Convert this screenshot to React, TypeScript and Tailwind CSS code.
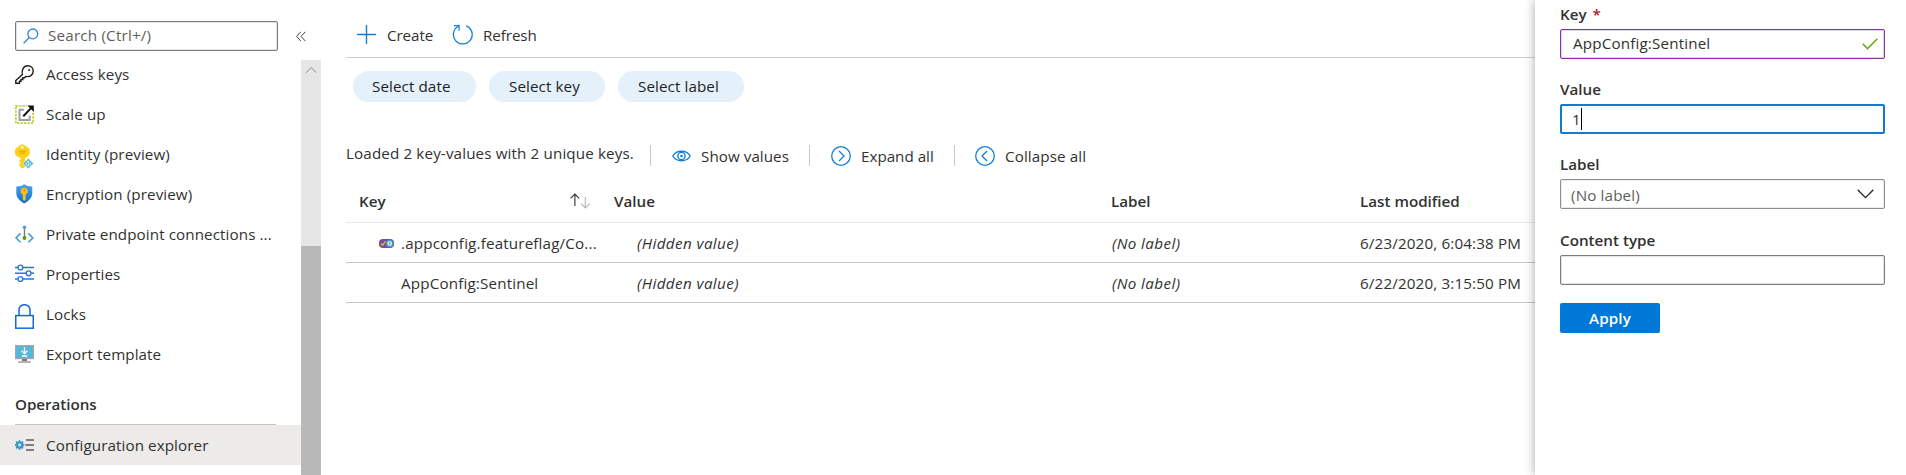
import type { ReactNode } from "react";

const KeyIcon = () => (
  <svg width="19" height="19" viewBox="0 0 19 19" fill="none" stroke="#1b1b1b" strokeWidth="1.4">
    <path d="M7.4 9.6C6.2 5.2 8.6.8 12.8.8c3.200 0 5.400 2.200 5.400 5.300 0 4-3.500 6.200-7.400 5.300L9.500 12.700H7.800v1.800H6v1.800H4.500v1.900H.8v-2.700z" />
    <circle cx="14.200" cy="4.900" r="1" fill="#1b1b1b" stroke="none" />
  </svg>
);

const ScaleIcon = () => (
  <svg width="19" height="19" viewBox="0 0 19 19" fill="none">
    <rect x="0.900" y="0.900" width="17.200" height="17.200" stroke="#b8d432" strokeWidth="1.800" strokeDasharray="2.300 1.140" />
    <rect x="12" y="0" width="7" height="7" fill="#fff" />
    <path d="M9 4.800H4.500v10.200h10.200V10.500" stroke="#a0a0a0" strokeWidth="2" />
    <path d="M8.300 11.200L15.800 3.400" stroke="#111" strokeWidth="2" />
    <path d="M12.300.6h6.500v6.500z" fill="#111" />
  </svg>
);

const IdentityIcon = () => (
  <svg width="20" height="25" viewBox="0 0 20 25" fill="none">
    <path d="M5.500.9Q7.300-.4 9.100.9l4.400 3.200q1.300 1 1.300 2.400v2.700q0 1.300-1 2.200l-3.600 3.100v8.200l-2.300 1.500q-.7.400-1.300-.2l-2.100-2.100v-1.600l1.300-1.200-1.300-1.200v-1.600l1.300-1.100v-1L1 11.400Q0 10.500 0 9.200V6.500Q0 5.100 1.300 4.100z" fill="#fcd116" />
    <circle cx="7.300" cy="3.300" r="1.400" fill="#fff" />
    <path d="M3.500 7.200h7.600M4.600 9.100h5.400" stroke="#d9a300" strokeWidth="1" />
    <path d="M13.300 14.300l5.400 5.200-5.400 5.200-5.400-5.200z" fill="#59b4d9" stroke="#fff" strokeWidth=".6" />
    <path d="M13.300 16.500v5.800M13.300 17l-2.800 3 2.800 2 2.800-2z" stroke="#d7eef8" strokeWidth=".9" />
  </svg>
);

const ShieldIcon = () => (
  <svg width="19" height="20" viewBox="0 0 19 20">
    <defs>
      <linearGradient id="shield" x1="0" y1="0" x2="0" y2="1">
        <stop offset="0" stopColor="#4aa3ee" />
        <stop offset="1" stopColor="#0f6fcb" />
      </linearGradient>
    </defs>
    <path d="M1.300 2.500Q6.300 2.600 9.300.3q3 2.300 8 2.200v6.800c0 5-4.600 8.200-8 10.200-3.400-2-8-5.200-8-10.200z" fill="url(#shield)" />
    <path d="M9.300 3.800a3.500 3.500 0 0 1 1.400 6.700v5.200L9.300 17l-1.500-1.400v-5.100A3.500 3.500 0 0 1 9.300 3.800z" fill="#fbc112" />
    <circle cx="9.300" cy="6.200" r="1" fill="#c98a00" />
  </svg>
);

const EndpointIcon = () => (
  <svg width="19" height="19" viewBox="0 0 19 19" fill="none">
    <path d="M5.600 8.400L1 12.900l4.600 4.300M13.300 8.400l4.600 4.500-4.600 4.300" stroke="#3fa1c9" strokeWidth="1.500" />
    <path d="M9.500 3v9" stroke="#7a7a7a" strokeWidth="1.400" />
    <circle cx="9.500" cy="2.300" r="1.700" fill="#3fa1c9" />
    <circle cx="9.500" cy="12.900" r="2" fill="#57a300" />
  </svg>
);

const PropertiesIcon = () => (
  <svg width="19" height="19" viewBox="0 0 19 19" fill="none" stroke="#2a75e0" strokeWidth="1.400">
    <path d="M0 3.500h3M8 3.500h11M0 9.300h11M16 9.300h3M0 15h3M8 15h11" strokeWidth="1.500" />
    <circle cx="5.400" cy="3.500" r="2.400" />
    <circle cx="13.600" cy="9.300" r="2.400" />
    <circle cx="5.400" cy="15" r="2.400" />
  </svg>
);

const LockIcon = () => (
  <svg width="19" height="25" viewBox="0 0 19 25" fill="none" stroke="#1565dc" strokeWidth="1.500">
    <rect x="0.750" y="11.600" width="17.500" height="12.600" />
    <path d="M4 11.600V5.700a5.500 5 0 0 1 11 0v5.900" />
  </svg>
);

const ExportIcon = () => (
  <svg width="19" height="18" viewBox="0 0 19 18" fill="none">
    <rect x="0.600" y="0.600" width="17.800" height="13" fill="#59b4d9" stroke="#a3a8aa" strokeWidth="1.200" />
    <path d="M7 14h5v2H7z" fill="#7a7a7a" />
    <path d="M3.200 17h12.600" stroke="#a0a1a2" strokeWidth="1.600" />
    <path d="M9.500 2.200v6M6.600 5.700l2.900 2.900 2.900-2.900M6.800 11h5.400" stroke="#fff" strokeWidth="1.300" />
  </svg>
);

const ConfigIcon = () => (
  <svg width="19" height="12" viewBox="0 0 19 12" fill="none">
    <circle cx="4.600" cy="6" r="2.600" stroke="#3999c6" strokeWidth="2.400" />
    <path d="M4.600 1.200v1.500M4.600 9.300v1.500M0 6h1.300M7.900 6h1.300M1.200 2.600l1.200 1.200M6.800 8.200L8 9.400M1.200 9.400l1.200-1.200M6.800 3.800L8 2.600" stroke="#3999c6" strokeWidth="1.900" />
    <path d="M11 1h8M10.300 6h8.700M11 11h8" stroke="#7f7f7f" strokeWidth="2" />
  </svg>
);

type Item = { label: string; icon: ReactNode; shift: string };

const items: Item[] = [
  { label: "Access keys", icon: <KeyIcon />, shift: "pb-[2px]" },
  { label: "Scale up", icon: <ScaleIcon />, shift: "pb-[2px]" },
  { label: "Identity (preview)", icon: <IdentityIcon />, shift: "pt-[3px]" },
  { label: "Encryption (preview)", icon: <ShieldIcon />, shift: "pb-[2px]" },
  { label: "Private endpoint connections ...", icon: <EndpointIcon />, shift: "pb-[2px]" },
  { label: "Properties", icon: <PropertiesIcon />, shift: "pb-[3px]" },
  { label: "Locks", icon: <LockIcon />, shift: "pt-[3px]" },
  { label: "Export template", icon: <ExportIcon />, shift: "pb-[2px]" },
];

function Sidebar() {
  return (
    <aside className="flex w-[321px] shrink-0 flex-col tracking-[0.09px]">
      <div className="flex h-[55px] shrink-0 items-start pl-[15px] pt-[21px]">
        <div className="flex h-[30px] w-[263px] items-center rounded-[2px] border border-[#7d7c7a] pl-[7px] text-[#605e5c] shadow-[inset_0_0_0_1px_#e4e4e4]">
          <svg width="16" height="16" viewBox="0 0 16 16" fill="none" stroke="#2b88d8" strokeWidth="1.300">
            <circle cx="9.800" cy="5.900" r="4.900" />
            <path d="M6.300 9.500L.6 15.200" />
          </svg>
          <span className="-mt-[2px] ml-[9px] tracking-[0.2px]">Search (Ctrl+/)</span>
        </div>
        <svg className="ml-[18px] mt-[10px]" width="10" height="11" viewBox="0 0 10 11" fill="none" stroke="#444" strokeWidth="1">
          <path d="M4.800.8L.6 5.400l4.200 4.600M9.300.8L5.100 5.400l4.200 4.600" />
        </svg>
      </div>
      <div className="flex min-h-0 flex-1">
        <div className="w-[301px]">
          {items.map((it) => (
            <div key={it.label} className="flex h-10 items-center pl-[15px]">
              <span className={`flex h-10 w-[31px] shrink-0 items-center ${it.shift}`}>{it.icon}</span>
              <span className="-mt-[2px] whitespace-nowrap">{it.label}</span>
            </div>
          ))}
          <div className="ml-[15px] flex h-[50px] w-[261px] items-center border-b border-[#c4c4c4] pt-2 font-semibold tracking-[-0.05px]">Operations</div>
          <div className="flex h-10 items-center bg-[#ecebe9] pl-[15px]">
            <span className="flex w-[31px] shrink-0 items-center">
              <ConfigIcon />
            </span>
            <span>Configuration explorer</span>
          </div>
        </div>
        <div className="mt-[5px] flex w-5 flex-col bg-[#e6e6e6]">
          <svg width="20" height="20" viewBox="0 0 20 20" fill="none" stroke="#8a8a8a" strokeWidth="1">
            <path d="M5.200 12.700L10.200 7.500l5 5.200" />
          </svg>
          <div className="mt-[166px] flex-1 bg-[#b8b8b8]" />
        </div>
      </div>
    </aside>
  );
}

const Circle = ({ d }: { d: string }) => (
  <svg width="20" height="20" viewBox="0 0 20 20" fill="none" stroke="#0f7fdc" strokeWidth="1.300">
    <circle cx="10" cy="10" r="9.300" />
    <path d={d} />
  </svg>
);

const Sep = () => <div className="h-[21px] w-px bg-[#c8c8c8]" />;

function Main() {
  return (
    <main className="ml-[25px] flex w-[1189px] shrink-0 flex-col whitespace-nowrap">
      <div className="flex h-[58px] items-center border-b border-[#d0d0d0] pl-[11px] pt-[13px] tracking-[-0.08px]">
        <svg className="-mt-[2px]" width="19" height="19" viewBox="0 0 19 19" stroke="#0f7fdc" strokeWidth="1.400">
          <path d="M9.500 0v19M0 9.500h19" />
        </svg>
        <span className="ml-[11px] w-[65px]">Create</span>
        <svg className="-mt-[2px]" width="21" height="21" viewBox="0 0 21 21" fill="none" stroke="#0f7fdc" strokeWidth="1.300">
          <path d="M6.300 2.300A9.400 9.400 0 1 0 14.200 1.800" />
          <path d="M2 1.700h5v5" />
        </svg>
        <span className="ml-[10px]">Refresh</span>
      </div>
      <div className="ml-[7px] mt-[13px] flex h-[31px] gap-[13px] text-[#1f1f1f]">
        <div className="flex w-[123px] items-center rounded-full bg-[#e4f1fb] pb-[2px] pl-[19px] tracking-[0.09px]">Select date</div>
        <div className="flex w-[116px] items-center rounded-full bg-[#e4f1fb] pb-[2px] pl-5 tracking-[0.09px]">Select key</div>
        <div className="flex w-[126px] items-center rounded-full bg-[#e4f1fb] pb-[2px] pl-5 tracking-[0.09px]">Select label</div>
      </div>
      <div className="mt-[43px] flex h-[21px] items-center">
        <span className="-mt-[6px] w-[304px] tracking-[0.13px]">Loaded 2 key-values with 2 unique keys.</span>
        <Sep />
        <svg className="ml-[21px]" width="19" height="12" viewBox="0 0 19 12" fill="none" stroke="#0f7fdc">
          <path d="M.8 6C4.500-.4 14.500-.4 18.200 6 14.500 12.400 4.500 12.400.8 6z" strokeWidth="1.400" />
          <circle cx="9.500" cy="6" r="3.600" strokeWidth="1.400" />
          <circle cx="9.500" cy="6" r="1.300" fill="#0f7fdc" stroke="none" />
        </svg>
        <span className="ml-[10px] w-[108px] tracking-[0.05px]">Show values</span>
        <Sep />
        <span className="ml-[21px] flex w-[30px]">
          <Circle d="M8 5l5 5-5 5" />
        </span>
        <span className="w-[93px]">Expand all</span>
        <Sep />
        <span className="ml-5 flex w-[30px]">
          <Circle d="M12 5l-5 5 5 5" />
        </span>
        <span className="tracking-[0.1px]">Collapse all</span>
      </div>
      <div className="mt-4 flex h-[41px] items-center border-b border-[#e8e8e8] pl-[13px] font-semibold">
        <span className="-mt-[2px] w-[211px]">Key</span>
        <svg className="-mt-[2px] mr-[24px]" width="20" height="16" viewBox="0 0 20 16" fill="none" strokeWidth="1.100">
          <path d="M4.900 13V1M.6 5.300L4.900 1l4.300 4.300" stroke="#323130" />
          <path d="M15.300 4v11M11 10.700l4.300 4.300 4.300-4.300" stroke="#b5b5b5" />
        </svg>
        <span className="-mt-[2px] w-[497px]">Value</span>
        <span className="-mt-[2px] w-[249px]">Label</span>
        <span className="-mt-[2px]">Last modified</span>
      </div>
      {[
        { k: ".appconfig.featureflag/Co...", flag: true, d: "6/23/2020, 6:04:38 PM" },
        { k: "AppConfig:Sentinel", flag: false, d: "6/22/2020, 3:15:50 PM" },
      ].map((r) => (
        <div key={r.k} className="flex h-10 items-center border-b border-[#c6c6c6] pl-[33px]">
          <span className="flex w-[22px] pt-[2px]">
            {r.flag && (
              <svg width="15" height="9" viewBox="0 0 15 9" fill="none">
                <rect width="15" height="9" rx="4" fill="#804998" />
                <path d="M2 4.500l1.600 1.700L6.500 2.300" stroke="#c3d130" strokeWidth="1.200" />
                <circle cx="10.700" cy="4.500" r="3.700" fill="#3f9fd0" />
                <circle cx="10.700" cy="4.500" r="1.700" stroke="#e8f5fb" strokeWidth="1.300" />
              </svg>
            )}
          </span>
          <span className="w-[236px] tracking-[0.16px]">{r.k}</span>
          <span className="w-[475px] italic tracking-[0.4px]">(Hidden value)</span>
          <span className="w-[248px] italic tracking-[0.4px]">(No label)</span>
          <span className="tracking-[0.15px]">{r.d}</span>
        </div>
      ))}
    </main>
  );
}

function Panel() {
  return (
    <section className="z-10 flex flex-1 flex-col bg-white pl-[25px] pr-[21px] shadow-[0_0_10px_rgba(0,0,0,0.35)]">
      <div className="flex h-[29px] items-center pb-[2px] font-semibold">
        Key<span className="ml-[6px] text-[#b0181f]">*</span>
      </div>
      <div className="flex h-[30px] items-center justify-between rounded-[2px] border border-[#8c2fa8] pl-3 pr-[6px] shadow-[inset_0_0_0_1px_#e6cfee]">
        <span className="-mt-[2px] tracking-[0.16px]">AppConfig:Sentinel</span>
        <svg width="16" height="12" viewBox="0 0 16 12" fill="none" stroke="#57a300" strokeWidth="1.300">
          <path d="M.8 5.700l4.700 5L15.300.8" />
        </svg>
      </div>
      <div className="flex h-[45px] items-end pb-1 font-semibold">Value</div>
      <div className="flex h-[30px] items-center rounded-[2px] border-2 border-[#0f7bd2] pl-[10px]">
        <span className="-mt-px">1</span>
        <span className="h-[22px] w-px bg-black" />
      </div>
      <div className="flex h-[45px] items-end pb-1 font-semibold">Label</div>
      <div className="flex h-[30px] items-center justify-between rounded-[2px] border border-[#8f8e8c] pl-[10px] pr-[10px] text-[#605e5c] shadow-[inset_0_0_0_1px_#ececec]">
        <span className="pt-px tracking-[0.15px]">(No label)</span>
        <svg width="17" height="10" viewBox="0 0 17 10" fill="none" stroke="#222" strokeWidth="1.300">
          <path d="M.7.8l7.800 7.800L16.300.8" />
        </svg>
      </div>
      <div className="flex h-[46px] items-end pb-1 font-semibold">Content type</div>
      <div className="h-[30px] rounded-[2px] border border-[#7d7c7a] shadow-[inset_0_0_0_1px_#e4e4e4]" />
      <button className="mt-[18px] flex h-[30px] w-[100px] items-center justify-center rounded-[2px] bg-[#0078d7] font-semibold tracking-[0.1px] text-white">Apply</button>
    </section>
  );
}

export default function App() {
  return (
    <div className="flex h-[475px] w-[1906px] overflow-hidden bg-white font-['Open_Sans','Noto_Sans',sans-serif] text-[15.2px] leading-[22px] text-[#323130]">
      <Sidebar />
      <Main />
      <Panel />
    </div>
  );
}
